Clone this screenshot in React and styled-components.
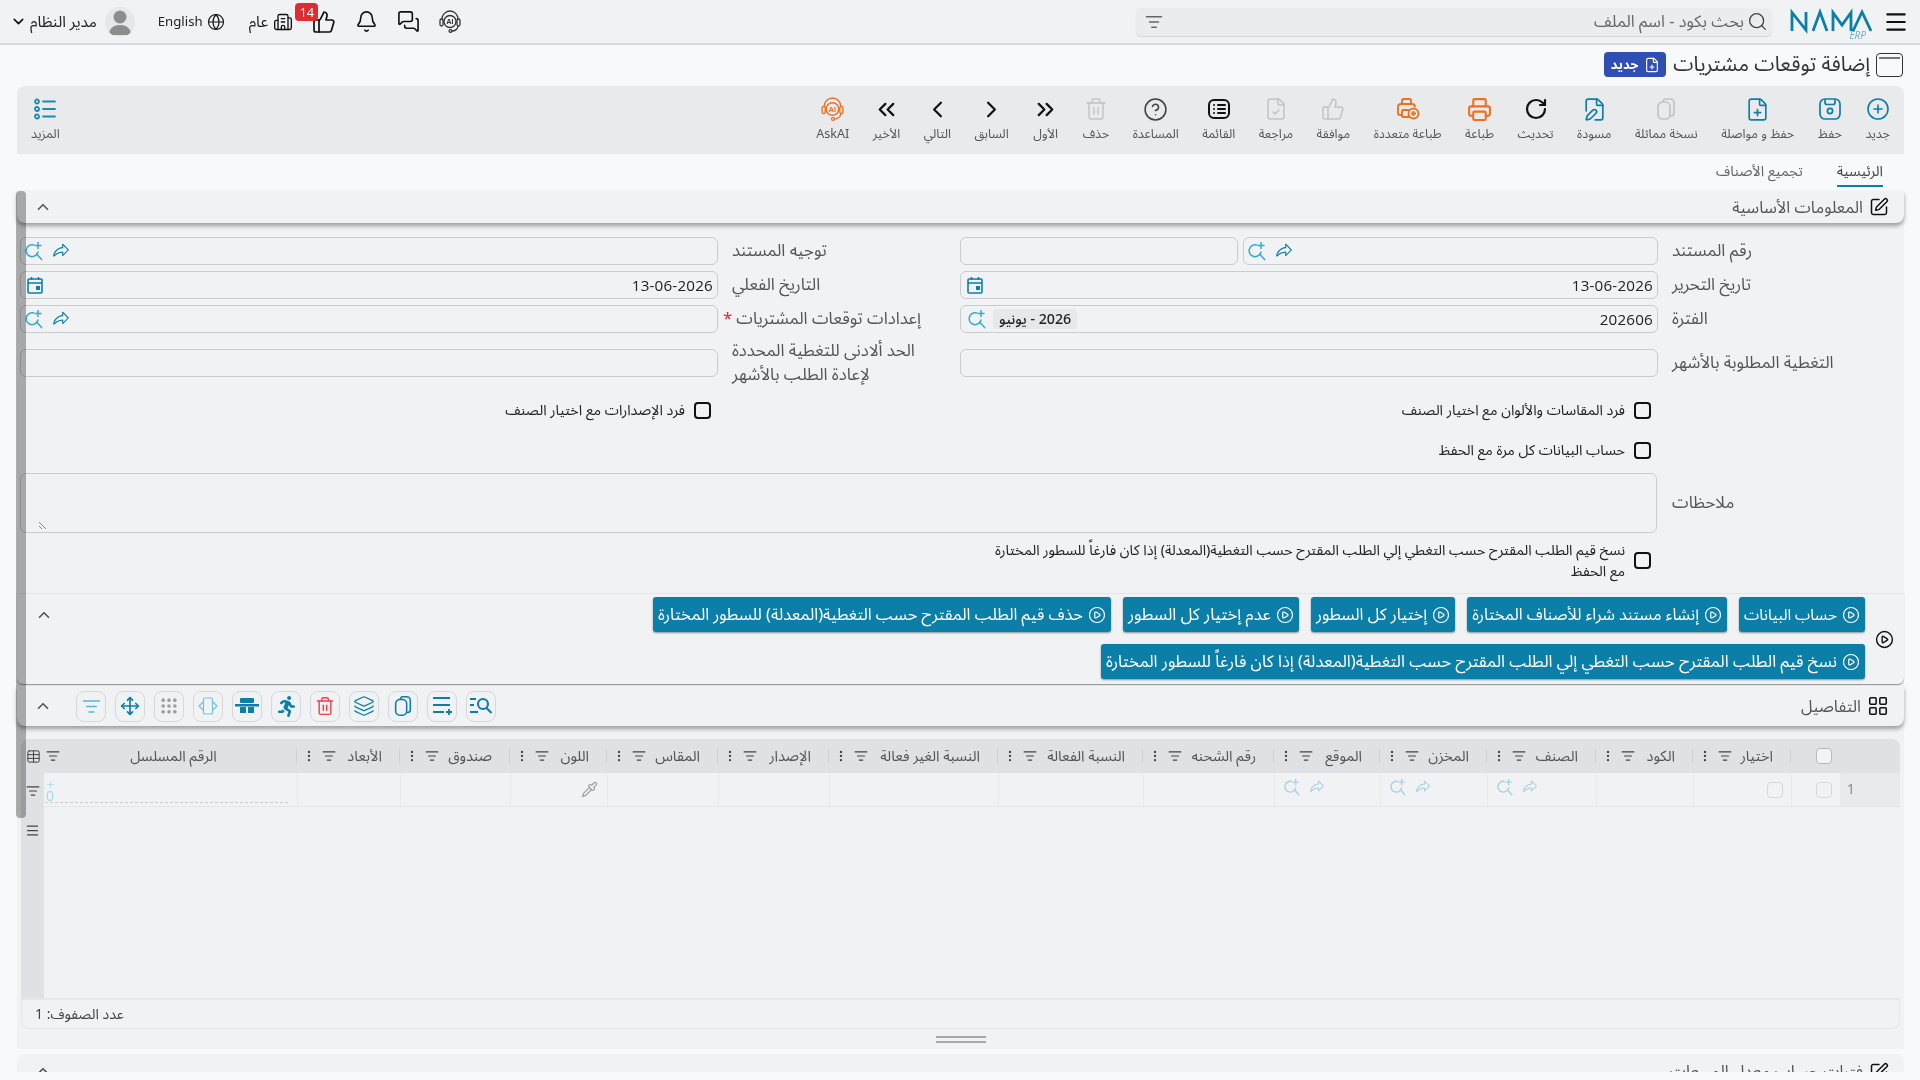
import React from 'react';
import styled, { createGlobalStyle } from 'styled-components';
import {
  CirclePlus, FilePlus, RotateCw, Printer, ThumbsUp, FileCheck, CircleHelp, Trash2,
  ChevronRight, ChevronLeft, ChevronsRight, ChevronsLeft, Search, Bell, MessagesSquare,
  Building2, Globe, ChevronDown, ChevronUp, SquarePen, LayoutGrid, CirclePlay, Pipette,
  Move, Layers, Grip, Menu, Table, ListFilter, EllipsisVertical, FilePen, Plus
} from 'lucide-react';
import { PiShareFat } from 'react-icons/pi';
import { FaRunning } from 'react-icons/fa';

const TEAL = '#0c7fa8';
const FONT = '"Noto Sans Arabic","Open Sans","Noto Sans",Roboto,"DejaVu Sans",sans-serif';

const Global = createGlobalStyle`
  html, body { margin: 0; padding: 0; background: #f8f9fb; }
  body { font-family: ${FONT}; color: #333; overflow: hidden; }
  * { box-sizing: border-box; }
`;

const Page = styled.div`
  width: 1920px; height: 1080px; overflow: hidden; direction: rtl; position: relative;
  background: #f8f9fb;
`;

/* ---------- top bar ---------- */
const TopBar = styled.header`
  height: 45px; background: #f1f2f4; border-bottom: 2px solid #d9dadd;
  display: flex; align-items: center; justify-content: space-between; padding: 0 11px 0 10px;
`;
const TopRight = styled.div`display: flex; align-items: center;`;
const Logo = styled.div`display: flex; margin-right: 11px; width: 82px; color: ${TEAL};`;
const SearchBar = styled.div`
  width: 636px; height: 28px; margin-right: 18px; background: #ebecee; border-radius: 5px;
  box-shadow: 0 1px 1px rgba(0,0,0,.12); display: flex; align-items: center; padding: 0 4px 0 9px;
  gap: 3px; font-size: 16.4px; color: #666;
`;
const SearchText = styled.span`flex: 1;`;
const TopLeft = styled.div`display: flex; align-items: center;`;
const TopIcon = styled.span`
  display: inline-flex; align-items: center; justify-content: center; color: #111; position: relative;
  margin-left: ${p => p.$gap || 0}px;
`;
const Badge = styled.span`
  position: absolute; top: -7px; right: 18px; width: 23px; height: 18px; border-radius: 4px;
  background: #e02b2f; color: #fff; font-size: 13px; line-height: 18px; text-align: center;
  font-family: "Open Sans",sans-serif;
`;
const TopText = styled.span`
  font-size: ${p => p.$size || 15.4}px; color: #222; margin-left: ${p => p.$gap || 0}px;
`;
const Avatar = styled.span`
  width: 30px; height: 30px; border-radius: 50%; background: #e6e7e9; display: inline-flex;
  align-items: center; justify-content: center; overflow: hidden; margin-left: 8px;
`;

/* ---------- title ---------- */
const TitleRow = styled.div`
  height: 41px; display: flex; align-items: center; padding: 0 17px 2px 0; gap: 6px;
`;
const WindowIcon = styled.span`
  width: 27px; height: 24px; border: 1px solid #333; border-radius: 4px; position: relative;
  &::before { content: ''; position: absolute; left: 2px; right: 2px; top: 3px; height: 2px; background: #777; }
`;
const TitleText = styled.h1`margin: 0; font-size: 20.5px; font-weight: 400; color: #333;`;
const NewBadge = styled.span`
  display: inline-flex; align-items: center; gap: 5px; height: 25px; width: 62px; justify-content: center;
  background: #2f4fb5; color: #fff; border-radius: 4px; font-size: 13px; font-weight: 700; margin-right: 1px;
`;

/* ---------- toolbar ---------- */
const Toolbar = styled.nav`
  margin: 0 16px 0 17px; height: 68px; background: #e9eaec; border-radius: 8px 8px 0 0;
  display: flex; align-items: flex-start; padding: 11px 14px 0 14px; gap: 23.5px;
`;
const ToolItem = styled.button`
  all: unset; display: flex; flex-direction: column; align-items: center; gap: 4px; cursor: pointer;
  margin-inline-start: ${p => (p.$push ? 'auto' : 0)};
  color: ${p => p.$color || '#111'}; font-family: ${FONT};
`;
const ToolIconBox = styled.span`height: 24px; display: flex; align-items: center; justify-content: center;`;
const ToolLabel = styled.span`font-size: 12.6px; color: #555; line-height: 18px; white-space: nowrap;`;

/* ---------- tabs ---------- */
const Tabs = styled.div`
  margin: 0 16px 0 17px; height: 33px; background: #f8f9fb; display: flex; gap: 34px; padding-right: 21px;
`;
const Tab = styled.div`
  height: 33px; line-height: 36px; font-size: 14.4px; color: ${p => (p.$active ? '#444' : '#666')};
  border-bottom: ${p => (p.$active ? `2px solid ${TEAL}` : '0')};
`;

/* ---------- panel ---------- */
const Panel = styled.main`
  margin: 4px 16px 0 17px; background: #f1f2f4; height: 858px; position: relative;
  display: flex; flex-direction: column;
`;
const ScrollThumb = styled.div`
  position: absolute; left: -1px; top: 0; width: 10px; height: 627px; background: #b0b1b1;
  border-radius: 4px; z-index: 5; mix-blend-mode: multiply;
`;
const SectionHead = styled.div`
  height: ${p => p.$h || 32}px; display: flex; align-items: center; justify-content: space-between;
  padding: 0 15px 0 17px; background: #f1f2f4; border-radius: 0 0 8px 8px; flex: none;
  margin-top: ${p => p.$top || 0}px;
  box-shadow: 0 3px 4px rgba(0,0,0,.35); position: relative; z-index: 2;
`;
const SectionTitle = styled.div`display: flex; align-items: center; gap: 6px; font-size: 16.4px; color: #555;`;
const HeadLeft = styled.div`display: flex; align-items: center; gap: 24px;`;

const FormGrid = styled.section`
  display: grid; grid-template-columns: 246px 698px 242px 698px; row-gap: 6px;
  grid-template-rows: 28px 28px 28px 48px 34px 34px 60px 42px;
  padding: 14px 0 0 3px; flex: none; height: 370px;
`;
const Label = styled.label`
  display: flex; align-items: center; justify-content: flex-end; text-align: left; white-space: nowrap;
  padding-left: 14px; font-size: 16.8px; color: #555; line-height: 24px;
`;
const LabelInner = styled.span`display: block;`;
const Required = styled.span`color: #e0252b; margin-left: -9px; margin-right: 4px;`;
const Control = styled.div`
  display: flex; gap: 5px; min-width: 0; align-items: ${p => (p.$middle ? 'center' : 'stretch')};
`;
const InputBox = styled.div`
  flex: ${p => (p.$w ? `0 0 ${p.$w}px` : 1)}; height: 28px; border: 1px solid #c9cbcc; border-radius: 6px;
  background: #f1f2f4; display: flex; align-items: center; justify-content: space-between; padding: 0 4px 0 6px;
  font-size: 14.5px; color: #222;
`;
const Value = styled.span`font-family: "Open Sans",sans-serif; direction: ltr; font-size: 15.2px; letter-spacing: .2px;`;
const IconPair = styled.span`
  display: inline-flex; align-items: center; gap: ${p => p.$gap ?? 8}px; direction: ltr;
  margin-right: ${p => (p.$inline ? 0 : 'auto')}; margin-left: ${p => (p.$inline ? 0 : '-3px')};
`;
const Chip = styled.span`
  background: #e7e8ea; border-radius: 3px; font-size: 14.2px; padding: 0 6px; height: 20px; line-height: 20px;
  margin-left: 3px; font-weight: 500; color: #222;
`;
const CheckRow = styled.div`
  display: flex; align-items: center; gap: 9px; padding-right: 7px; font-size: 14.3px; color: #222;
  grid-column: ${p => p.$span || 'auto'}; line-height: 21px; padding-top: 1px;
`;
const CheckBox = styled.span`
  width: 17px; height: 17px; border: 2px solid #111; border-radius: 4px; flex: none;
`;
const CheckText = styled.span`max-width: 645px;`;
const NotesBox = styled.div`
  grid-column: 2 / 5; position: relative; border: 1px solid #c9cbcc; border-radius: 6px; height: 60px;
  margin-right: 1px;
`;
const Grip2 = styled.svg`position: absolute; left: 17px; bottom: 2px;`;

const ActionSection = styled.section`
  flex: none; height: 91px; display: flex; align-items: stretch; border-top: 1px solid #e4e5e7;
  box-shadow: 0 1px 1px rgba(0,0,0,.4); border-radius: 0 0 6px 6px; position: relative; z-index: 1;
`;
const PlayCell = styled.div`
  flex: 0 0 39px; display: flex; align-items: center; justify-content: center; color: #111;
`;
const ActionButtons = styled.div`
  flex: 1; display: flex; flex-wrap: wrap; gap: 12px 12px; align-content: flex-start; padding-top: 3px;
`;
const ActionBtn = styled.button`
  all: unset; box-sizing: border-box; height: 35px; background: ${TEAL}; color: #fff; border-radius: 3px; padding: 0 5px;
  display: inline-flex; align-items: center; gap: 5px; font-size: ${p => p.$size}px; font-family: ${FONT}; white-space: nowrap;
  box-shadow: 0 1px 2px rgba(0,0,0,.4);
`;
const CollapseCell = styled.div`flex: 0 0 54px; display: flex; justify-content: center; padding-top: 12px; color: #555;`;

const IconBtnRow = styled.div`display: flex; gap: 9px;`;
const IconBtn = styled.button`
  all: unset; box-sizing: border-box; width: 30px; height: 31px; border: 1px solid #d6d8db; border-radius: 8px; display: flex;
  align-items: center; justify-content: center; color: ${p => p.$color || TEAL};
`;

/* ---------- grid ---------- */
const GridWrap = styled.div`
  margin: 13px 4px 0 4px; height: 259px; flex: none; display: flex; flex-direction: column;
  border-radius: 8px 8px 0 0; overflow: hidden; position: relative;
`;
const GridHeadRow = styled.div`
  display: grid; grid-template-columns: ${p => p.$cols}; height: 34px; background: #dfe1e5; flex: none;
`;
const HeadCell = styled.div`
  display: flex; align-items: center; justify-content: space-between; padding: 0 18px 0 5px;
  font-size: 14.6px; color: #555; position: relative; white-space: nowrap; min-width: 0;
  &::before { content: ''; position: absolute; right: 0; top: 10px; bottom: 10px; border-right: 1px solid #cdd0d4; }
`;
const WideHeadCell = styled(HeadCell)`padding: 0 0 0 1px;`;
const CenterLabel = styled.span`flex: 1; text-align: center; padding-right: 10px;`;
const HeadTools = styled.span`display: inline-flex; align-items: center; gap: 6px; color: #444;`;
const GridBody = styled.div`flex: 1; display: flex; min-height: 0;`;
const GridMain = styled.div`flex: 1; min-width: 0;`;
const GridRail = styled.div`
  width: 23px; flex: none; background: #dfe1e5; display: flex; flex-direction: column; align-items: center;
  padding-top: 11px; gap: 25px; color: #444;
`;
const DataRow = styled.div`
  display: grid; grid-template-columns: ${p => p.$cols}; height: 34px; border-bottom: 1px solid #e5e6e9;
`;
const DataCell = styled.div`
  display: flex; align-items: center; justify-content: ${p => p.$j || 'center'}; border-left: ${p => (p.$plain ? '0' : '1px solid #e8e9eb')};
  font-size: 13.5px; color: #888; gap: 10px; position: relative; min-width: 0;
  background: ${p => p.$bg || 'transparent'}; padding: ${p => p.$pad || 0};
`;
const LiftedIcons = styled.span`display: inline-flex; margin-bottom: 5px;`;
const RowCheck = styled.span`
  width: 16px; height: 16px; border: 1px solid #d6d8db; border-radius: 4px; background: #f1f2f4;
`;
const HeadCheck = styled(RowCheck)`border-color: #b7babe; background: #f3f4f6;`;
const SerialInput = styled.div`
  position: absolute; left: 0; right: 9px; bottom: 3px; height: 26px; border-bottom: 1px dashed #c9cbce;
`;
const SerialPlus = styled.span`
  position: absolute; left: -1px; bottom: 4px; font-size: 14px; line-height: 12px; color: #a2d9ee; width: 12px;
  font-family: "Open Sans",sans-serif; display: flex; flex-direction: column; align-items: center;
`;
const GridFooter = styled.div`
  height: 31px; margin: 0 4px; flex: none; border: 1px solid #e5e6e9; border-top: 2px solid #e6e7ea; border-radius: 0 0 8px 8px;
  display: flex; align-items: center; justify-content: flex-end; padding-left: 13px; font-size: 14.2px; color: #444;
`;
const Resize = styled.div`
  flex: 1; display: flex; align-items: center; justify-content: center;
`;
const ResizeBar = styled.div`
  width: 50px; height: 7px; border-top: 2px solid #a5a8b0; border-bottom: 2px solid #a5a8b0;
`;
const BottomPanel = styled.section`
  margin: 5px 16px 0 17px; height: 18px; background: #f1f2f4; border-radius: 8px 8px 0 0; overflow: hidden;
`;
const BottomStrip = styled.div`
  display: flex; justify-content: space-between; align-items: flex-start; padding: 8px 15px 0 17px; line-height: 20px;
`;

/* ---------- drawn icons ---------- */
const SearchPlus = ({ color = '#35a9d3', size = 20 }) => (
  <svg width={size} height={size} viewBox="0 0 20 20" fill="none" stroke={color} strokeWidth="1.5" strokeLinecap="round">
    <path d="M9.5 3.8A6 6 0 1 0 14 11" /><path d="M12.6 13l5 5.6" /><path d="M14 1.5v6M11 4.5h6" />
  </svg>
);
const Share = ({ color = TEAL, size = 18 }) => <PiShareFat size={size} color={color} />;
const Calendar = () => (
  <svg width="16" height="18" viewBox="0 0 16 18" fill="none" stroke={TEAL} strokeWidth="1.6">
    <rect x="1" y="3" width="14" height="14" rx="1" /><path d="M1 7h14M4.5 1v3M11.5 1v3" /><rect x="9" y="10" width="4" height="4" fill={TEAL} stroke="none" />
  </svg>
);
const SaveIcon = () => (
  <svg width="24" height="24" viewBox="0 0 24 24" fill="none" stroke={TEAL} strokeWidth="1.7">
    <rect x="2" y="2" width="20" height="20" rx="5" /><path d="M7 2v3.5a2 2 0 0 0 2 2h6a2 2 0 0 0 2-2V2" /><circle cx="12" cy="14" r="2.6" />
  </svg>
);
const CopyIcon = ({ color = '#c2c3c6', size = 24 }) => (
  <svg width={size} height={size} viewBox="0 0 24 24" fill="none" stroke={color} strokeWidth="1.7">
    <rect x="4" y="5" width="12" height="17" rx="4.5" /><path d="M9 5V4.5A3 3 0 0 1 12 2h4a4 4 0 0 1 4 4v10a3 3 0 0 1-3 3h-1" />
  </svg>
);
const ListBox = () => (
  <svg width="24" height="24" viewBox="0 0 24 24" fill="none" stroke="#111" strokeWidth="2" strokeLinecap="round">
    <rect x="2" y="3" width="20" height="18" rx="5" /><path d="M7 8h.01M7 12h.01M7 16h.01M11 8h7M11 12h7M11 16h7" />
  </svg>
);
const MoreList = () => (
  <svg width="24" height="24" viewBox="0 0 24 24" fill="none" stroke={TEAL} strokeWidth="1.8" strokeLinecap="round" opacity=".9">
    <circle cx="4" cy="4.5" r="2" /><circle cx="4" cy="12" r="2" /><circle cx="4" cy="19.5" r="2" /><path d="M10 4.5h12M10 12h12M10 19.5h12" />
  </svg>
);
const AiHead = ({ color = '#333', size = 24 }) => (
  <svg width={size} height={size} viewBox="0 0 24 24" fill="none" stroke={color} strokeWidth="1.3">
    <rect x="2" y="9" width="3" height="7" rx="1.5" /><rect x="19" y="9" width="3" height="7" rx="1.5" />
    <path d="M4 9a8 8 0 0 1 16 0M20 16c0 3-3 5-6 5" /><circle cx="12.5" cy="21" r="1.4" />
    <path d="M12 5.5a6 6 0 0 1 6 6 6 6 0 0 1-6 6 6 6 0 0 1-6-6 6 6 0 0 1 6-6z" />
    <text x="12" y="14.2" fontSize="7" textAnchor="middle" fill={color} stroke="none" fontWeight="700" fontFamily="Open Sans">AI</text>
  </svg>
);
const PrintPlus = () => (
  <svg width="24" height="24" viewBox="0 0 24 24" fill="none" stroke="#f0701f" strokeWidth="1.9" strokeLinejoin="round">
    <path d="M6 7V3.5A1.5 1.5 0 0 1 7.5 2h6A1.5 1.5 0 0 1 15 3.5V7" />
    <path d="M6 18H4a2 2 0 0 1-2-2v-6a3 3 0 0 1 3-3h11a3 3 0 0 1 3 3" /><rect x="6" y="13" width="8" height="7" rx="1" />
    <circle cx="17.5" cy="16.5" r="5" fill="#e9eaec" /><path d="M17.5 14v5M15 16.5h5" />
  </svg>
);
const Person = () => (
  <svg width="24" height="28" viewBox="0 0 24 28" fill="#8d8d8d"><circle cx="12" cy="9" r="6.5" /><path d="M1 27c0-7 5-10 11-10s11 3 11 10z" /></svg>
);
const NamaLogo = () => (
  <svg width="82" height="36" viewBox="0 0 82 36" fill="none" style={{ direction: 'ltr' }}>
    <path d="M2 27V8.5L16 26V8M23 27L30 8L37 27M43 27V8.5L52 21L61 8.5V27M63 27L72 8L81 27" stroke="#0c7fa8" strokeWidth="2.8" />
    <text x="76" y="35" textAnchor="end" fontSize="10" fontStyle="italic" fill="#5db3d3" fontFamily="Open Sans">ERP</text>
  </svg>
);
const SpreadIcon = () => (
  <svg width="24" height="22" viewBox="0 0 24 22" fill="none" stroke="#73c3de" strokeWidth="1.2">
    <rect x="7.5" y="3" width="9" height="16" rx="1" /><path d="M7 7L3 11l4 4M17 7l4 4-4 4" />
  </svg>
);
const TableMove = () => (
  <svg width="26" height="20" viewBox="0 0 26 20" fill={TEAL}>
    <rect x="6" y="2" width="14" height="5" rx="1" /><rect x="1" y="8" width="24" height="2.5" /><rect x="6" y="11" width="6" height="6" /><rect x="14" y="11" width="6" height="6" />
  </svg>
);
const ListPlus = () => (
  <svg width="22" height="22" viewBox="0 0 22 22" fill="none" stroke={TEAL} strokeWidth="1.8"><path d="M2 3h17M2 10h17M2 17h11M18 14v6M15 17h6" /></svg>
);
const ListSearch = () => (
  <svg width="24" height="22" viewBox="0 0 24 22" fill="none" stroke={TEAL} strokeWidth="2.1"><path d="M1 4h6M1 10h4M1 17h8" /><circle cx="14" cy="9" r="5" /><path d="M17.5 13l5 5" /></svg>
);

/* ---------- data ---------- */
const tools = [
  ['جديد', <CirclePlus size={24} strokeWidth={1.6} color={TEAL} />],
  ['حفظ', <SaveIcon />],
  ['حفظ و مواصلة', <FilePlus size={25} strokeWidth={1.6} color={TEAL} />],
  ['نسخة مماثلة', <CopyIcon />],
  ['مسودة', <FilePen size={25} strokeWidth={1.6} color={TEAL} />],
  ['تحديث', <RotateCw size={24} strokeWidth={2.2} color="#111" />],
  ['طباعة', <Printer size={25} strokeWidth={2} color="#f0701f" />],
  ['طباعة متعددة', <PrintPlus />],
  ['موافقة', <ThumbsUp size={24} strokeWidth={1.5} color="#c2c3c6" />],
  ['مراجعة', <FileCheck size={24} strokeWidth={1.5} color="#c2c3c6" />],
  ['القائمة', <ListBox />],
  ['المساعدة', <CircleHelp size={25} strokeWidth={1.5} color="#444" />],
  ['حذف', <Trash2 size={24} strokeWidth={1.4} color="#c2c3c6" />],
  ['الأول', <ChevronsRight size={27} strokeWidth={2} color="#111" />],
  ['السابق', <ChevronRight size={27} strokeWidth={2} color="#111" />],
  ['التالي', <ChevronLeft size={27} strokeWidth={2} color="#111" />],
  ['الأخير', <ChevronsLeft size={27} strokeWidth={2} color="#111" />],
  ['AskAI', <AiHead color="#f0701f" size={25} />],
];
const actions = [
  ['حساب البيانات', 15.4],
  ['إنشاء مستند شراء للأصناف المختارة', 16.2],
  ['إختيار كل السطور', 16.4],
  ['عدم إختيار كل السطور', 16.7],
  ['حذف قيم الطلب المقترح حسب التغطية(المعدلة) للسطور المختارة', 16.4],
  ['نسخ قيم الطلب المقترح حسب التغطي إلي الطلب المقترح حسب التغطية(المعدلة) إذا كان فارغاً للسطور المختارة', 16.6],
];
const COLS = '60px 49px 98px 97px 109px 107px 106px 131px 145px 169px 111px 111px 97px 110px 103px 252px';
const columns = ['اختيار', 'الكود', 'الصنف', 'المخزن', 'الموقع', 'رقم الشحنه', 'النسبة الفعالة', 'النسبة الغير فعالة', 'الإصدار', 'المقاس', 'اللون', 'صندوق', 'الأبعاد'];

const Lookup = ({ faded, inline }) => (
  <IconPair $inline={inline}>
    <SearchPlus color={faded ? '#a5d3e4' : '#35a9d3'} size={faded ? 18 : 20} />
    <Share color={faded ? '#a5cfdf' : TEAL} size={faded ? 16 : 18} />
  </IconPair>
);
const Filter = ({ size = 15 }) => <ListFilter size={size} strokeWidth={2} />;
const LookupCell = () => (
  <DataCell $j="flex-end" $pad="0 0 0 8px"><LiftedIcons><Lookup faded inline /></LiftedIcons></DataCell>
);

export default function App() {
  return (
    <Page>
      <Global />
      <TopBar>
        <TopRight>
          <TopIcon><Menu size={26} strokeWidth={2} /></TopIcon>
          <Logo><NamaLogo /></Logo>
          <SearchBar>
            <Search size={21} strokeWidth={1.5} color="#444" />
            <SearchText>بحث بكود - اسم الملف</SearchText>
            <ListFilter size={18} color="#666" />
          </SearchBar>
        </TopRight>
        <TopLeft>
          <TopIcon $gap={18}><AiHead size={24} /></TopIcon>
          <TopIcon $gap={19}><MessagesSquare size={23} strokeWidth={1.7} /></TopIcon>
          <TopIcon $gap={19}><Bell size={23} strokeWidth={1.7} /></TopIcon>
          <TopIcon $gap={19}><ThumbsUp size={24} strokeWidth={1.7} /><Badge>14</Badge></TopIcon>
          <TopIcon $gap={5}><Building2 size={20} strokeWidth={1.6} /></TopIcon>
          <TopText $gap={24}>عام</TopText>
          <TopIcon $gap={4}><Globe size={18} strokeWidth={1.5} /></TopIcon>
          <TopText $gap={23} $size={13.2}>English</TopText>
          <Avatar><Person /></Avatar>
          <TopText $gap={3}>مدير النظام</TopText>
          <TopIcon><ChevronDown size={17} strokeWidth={2.2} /></TopIcon>
        </TopLeft>
      </TopBar>

      <TitleRow>
        <WindowIcon />
        <TitleText>إضافة توقعات مشتريات</TitleText>
        <NewBadge><FilePlus size={16} strokeWidth={1.7} />جديد</NewBadge>
      </TitleRow>

      <Toolbar>
        {tools.map(([label, icon]) => (
          <ToolItem key={label}><ToolIconBox>{icon}</ToolIconBox><ToolLabel>{label}</ToolLabel></ToolItem>
        ))}
        <ToolItem $push><ToolIconBox><MoreList /></ToolIconBox><ToolLabel>المزيد</ToolLabel></ToolItem>
      </Toolbar>

      <Tabs>
        <Tab $active>الرئيسية</Tab>
        <Tab>تجميع الأصناف</Tab>
      </Tabs>

      <Panel>
        <ScrollThumb />
        <SectionHead>
          <SectionTitle><SquarePen size={20} color="#111" strokeWidth={1.8} />المعلومات الأساسية</SectionTitle>
          <ChevronUp size={18} strokeWidth={2.2} color="#555" />
        </SectionHead>

        <FormGrid>
          <Label><LabelInner>رقم المستند</LabelInner></Label>
          <Control>
            <InputBox><Lookup /></InputBox>
            <InputBox $w={278} />
          </Control>
          <Label><LabelInner>توجيه المستند</LabelInner></Label>
          <Control><InputBox><Lookup /></InputBox></Control>

          <Label><LabelInner>تاريخ التحرير</LabelInner></Label>
          <Control><InputBox><Value>13-06-2026</Value><Calendar /></InputBox></Control>
          <Label><LabelInner>التاريخ الفعلي</LabelInner></Label>
          <Control><InputBox><Value>13-06-2026</Value><Calendar /></InputBox></Control>

          <Label><LabelInner>الفترة</LabelInner></Label>
          <Control>
            <InputBox>
              <Value>202606</Value>
              <IconPair $gap={3} $inline><SearchPlus /><Chip dir="rtl">2026 - يونيو</Chip></IconPair>
            </InputBox>
          </Control>
          <Label><LabelInner>إعدادات توقعات المشتريات<Required>*</Required></LabelInner></Label>
          <Control><InputBox><Lookup /></InputBox></Control>

          <Label><LabelInner>التغطية المطلوبة بالأشهر</LabelInner></Label>
          <Control $middle><InputBox /></Control>
          <Label><LabelInner>الحد ألادنى للتغطية المحددة<br />لإعادة الطلب بالأشهر</LabelInner></Label>
          <Control $middle><InputBox /></Control>

          <span />
          <CheckRow><CheckBox />فرد المقاسات والألوان مع اختيار الصنف</CheckRow>
          <span />
          <CheckRow><CheckBox />فرد الإصدارات مع اختيار الصنف</CheckRow>

          <span />
          <CheckRow $span="2 / 5"><CheckBox />حساب البيانات كل مرة مع الحفظ</CheckRow>

          <Label><LabelInner>ملاحظات</LabelInner></Label>
          <NotesBox>
            <Grip2 width="9" height="9" viewBox="0 0 9 9" stroke="#888" strokeWidth="1"><path d="M1 1l7 7M1 5l3 3" /></Grip2>
          </NotesBox>

          <span />
          <CheckRow $span="2 / 5">
            <CheckBox />
            <CheckText>نسخ قيم الطلب المقترح حسب التغطي إلي الطلب المقترح حسب التغطية(المعدلة) إذا كان فارغاً للسطور المختارة مع الحفظ</CheckText>
          </CheckRow>
        </FormGrid>

        <ActionSection>
          <PlayCell><CirclePlay size={19} strokeWidth={1.8} /></PlayCell>
          <ActionButtons>
            {actions.map(([t, size]) => (
              <ActionBtn key={t} $size={size}><CirclePlay size={18} strokeWidth={1.6} />{t}</ActionBtn>
            ))}
          </ActionButtons>
          <CollapseCell><ChevronUp size={18} strokeWidth={2.2} /></CollapseCell>
        </ActionSection>

        <SectionHead $h={40} $top={2}>
          <SectionTitle><LayoutGrid size={22} color="#111" strokeWidth={1.7} />التفاصيل</SectionTitle>
          <HeadLeft>
            <IconBtnRow>
              <IconBtn><ListSearch /></IconBtn>
              <IconBtn><ListPlus /></IconBtn>
              <IconBtn><CopyIcon color={TEAL} size={22} /></IconBtn>
              <IconBtn><Layers size={22} strokeWidth={1.4} /></IconBtn>
              <IconBtn $color="#ef4146"><Trash2 size={20} strokeWidth={1.7} /></IconBtn>
              <IconBtn><FaRunning size={21} /></IconBtn>
              <IconBtn><TableMove /></IconBtn>
              <IconBtn><SpreadIcon /></IconBtn>
              <IconBtn $color="#9a9da3"><Grip size={20} strokeWidth={2.4} /></IconBtn>
              <IconBtn><Move size={20} strokeWidth={2} /></IconBtn>
              <IconBtn $color="#5db3d3"><Filter size={19} /></IconBtn>
            </IconBtnRow>
            <ChevronUp size={18} strokeWidth={2.2} color="#555" />
          </HeadLeft>
        </SectionHead>

        <GridWrap>
          <GridHeadRow $cols={`${COLS} 23px`}>
            <DataCell $plain />
            <DataCell $plain $j="flex-start" $pad="0 8px 0 0"><HeadCheck /></DataCell>
            {columns.map(c => (
              <HeadCell key={c}>
                {c}
                <HeadTools>
                  <Filter size={14} />
                  <EllipsisVertical size={14} strokeWidth={2} />
                </HeadTools>
              </HeadCell>
            ))}
            <WideHeadCell>
              <CenterLabel>الرقم المسلسل</CenterLabel>
              <HeadTools><Filter size={14} /></HeadTools>
            </WideHeadCell>
            <DataCell $plain><Table size={15} strokeWidth={1.6} color="#444" /></DataCell>
          </GridHeadRow>
          <GridBody>
            <GridMain>
              <DataRow $cols={COLS}>
                <DataCell $j="flex-end" $pad="0 0 0 6px" $bg="#e9eaed">1</DataCell>
                <DataCell $j="flex-start" $pad="0 8px 0 0"><RowCheck /></DataCell>
                <DataCell $j="flex-start" $pad="0 8px 0 0"><RowCheck /></DataCell>
                <DataCell />
                <LookupCell />
                <LookupCell />
                <LookupCell />
                <DataCell /><DataCell /><DataCell /><DataCell /><DataCell />
                <DataCell $j="flex-start" $pad="0 9px 0 0"><Pipette size={17} color="#999" strokeWidth={1.6} /></DataCell>
                <DataCell /><DataCell />
                <DataCell $plain>
                  <SerialInput />
                  <SerialPlus><Plus size={11} strokeWidth={1.5} />0</SerialPlus>
                </DataCell>
              </DataRow>
            </GridMain>
            <GridRail>
              <Filter size={14} />
              <Menu size={15} strokeWidth={2} />
            </GridRail>
          </GridBody>
        </GridWrap>

        <GridFooter>عدد الصفوف: 1</GridFooter>
        <Resize><ResizeBar /></Resize>
      </Panel>

      <BottomPanel>
        <BottomStrip>
          <SectionTitle><SquarePen size={20} color="#111" strokeWidth={1.8} />فترات حساب معدل المبيعات</SectionTitle>
          <ChevronUp size={18} strokeWidth={2.2} color="#555" />
        </BottomStrip>
      </BottomPanel>
    </Page>
  );
}
